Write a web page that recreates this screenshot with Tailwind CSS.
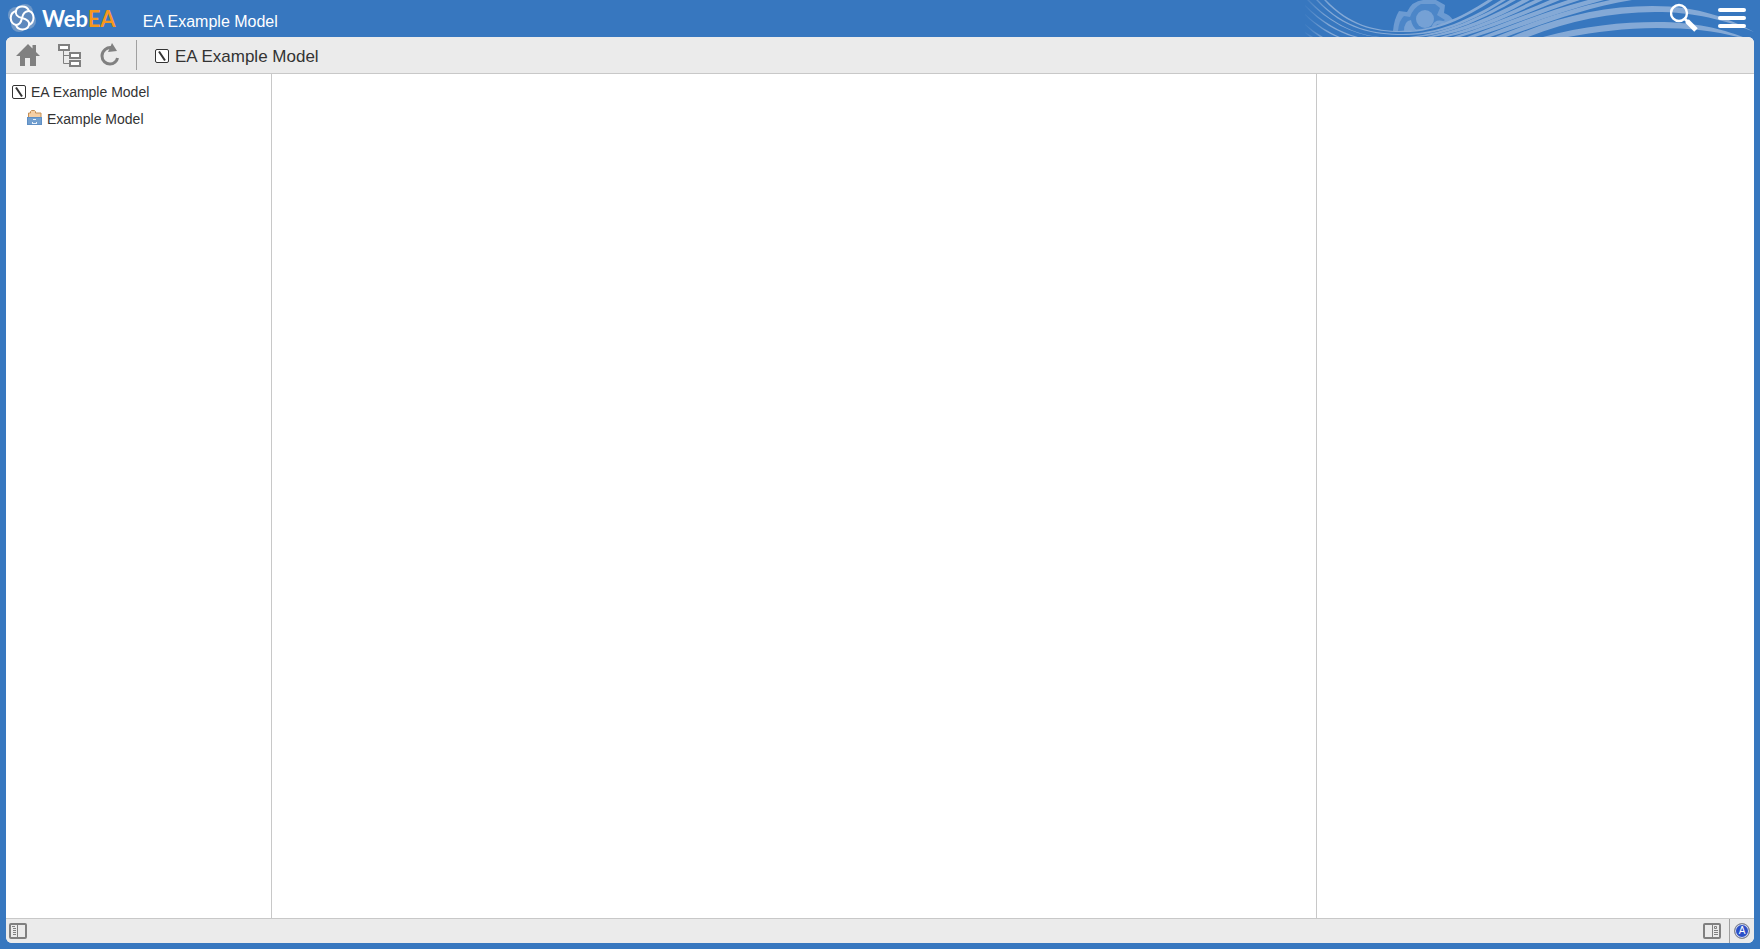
<!DOCTYPE html>
<html lang="en">
  <head>
    <meta charset="UTF-8" />
    <meta name="viewport" content="width=device-width, initial-scale=1.0" />
    <title>WebEA - EA Example Model</title>
    <script src="https://cdn.jsdelivr.net/npm/@tailwindcss/browser@4"></script>
  </head>
  <body class="flex h-screen flex-col bg-[#3777bf] font-['Liberation_Sans',Arial,sans-serif] text-[#333333]">
    <!-- Header -->
    <header class="relative flex h-[37px] shrink-0 items-center justify-between overflow-hidden pl-2 pr-[14px] text-white">
      <svg class="absolute right-0 top-0" width="460" height="37" viewBox="1300 0 460 37" fill="none" aria-hidden="true">
        <defs>
          <linearGradient id="fade" gradientUnits="userSpaceOnUse" x1="1302" y1="0" x2="1330" y2="0">
            <stop offset="0" stop-color="#84a9d6" stop-opacity="0" />
            <stop offset="1" stop-color="#84a9d6" />
          </linearGradient>
        </defs>
        <!-- Cog flower -->
        <path d="M1393 31Q1394 19 1399 11L1407 12Q1412 1 1423 0H1436L1445 5L1444 13Q1450 15 1453 20L1440 27L1415 31Z" fill="#6c9bd2" />
        <path d="M1398 31Q1399 20 1404 16L1410 17Q1413 8 1421 4H1435L1440 8L1437 15L1445 20L1433 28Z" fill="#4c86c8" />
        <circle cx="1425" cy="19" r="9" fill="#75a1d5" />
        <path d="M1404 31Q1404 21 1411 20Q1412 27 1418 31Z" fill="#75a1d5" />
        <path d="M1433 27Q1436 20 1444 23" stroke="#75a1d5" stroke-width="3" />
        <!-- Waves -->
        <path d="M1390 38V32Q1440 34 1490 0H1560L1470 37Z" fill="#3777bf" />
        <g fill="url(#fade)">
          <path d="M1326 0C1350 25 1375 31 1401 31C1432 31 1460 18 1488 0H1493C1464 19 1435 33 1401 32C1374 32 1348 26 1324 0Z" />
          <path d="M1318 0C1345 29 1375 34 1403 34C1438 34 1470 19 1501 0H1506C1475 20 1441 36 1403 35C1374 35 1344 30 1316 0Z" />
          <path d="M1309 0C1330 22 1355 35 1380 37H1376C1352 34 1328 22 1307 0Z" />
          <path d="M1305 5C1322 22 1340 32 1358 37H1354C1337 32 1320 22 1305 6Z" />
          <path d="M1305 14C1317 25 1330 33 1340 37H1337C1327 33 1315 25 1305 15Z" />
          <path d="M1305 24Q1314 32 1323 37H1320Q1312 32 1305 25Z" />
          <path d="M1305 32L1313 37H1310L1305 33Z" />
          <path d="M1409 37C1447 33 1480 17 1510 0H1516C1485 18 1452 34 1418 37Z" />
          <path d="M1426 37C1460 30 1492 16 1522 0H1530C1498 18 1465 32 1433 37Z" />
          <path d="M1440 37C1475 28 1505 14 1535 0H1543C1512 15 1480 30 1446 37Z" />
          <path d="M1453 37C1487 26 1519 13 1550 0H1560C1526 14 1494 28 1460 37Z" />
          <path d="M1467 37C1500 25 1534 11 1568 0H1580C1543 12 1508 27 1475 37Z" />
          <path d="M1481 37C1517 23 1553 9 1588 0H1604C1565 10 1527 25 1490 37Z" />
          <path d="M1495 37C1532 22 1571 8 1610 0H1632C1588 7 1545 23 1506 37Z" />
          <path d="M1511 37C1560 16 1605 6 1652 6C1700 6 1730 19 1754 32C1725 20 1695 12 1655 12C1610 12 1570 21 1528 37Z" />
          <path d="M1543 37C1583 26 1622 22 1657 22C1695 22 1722 29 1743 37H1738C1715 31 1690 28 1657 28C1625 28 1595 32 1568 37Z" />
        </g>
      </svg>
      <div class="relative flex items-center">
        <a href="#" class="flex items-center" aria-label="WebEA home">
          <svg width="28" height="28" viewBox="0 0 28 28" fill="none" class="-mt-px" aria-hidden="true">
            <g fill="#7199c8">
              <circle cx="14" cy="14" r="12" />
              <circle cx="17" cy="8" r="8" />
              <circle cx="20" cy="17" r="8" />
              <circle cx="11" cy="20" r="8" />
              <circle cx="8" cy="11" r="8" />
            </g>
            <path d="M8 7C9 1 19 1 21 7C27 9 27 18 21 21C19 27 10 27 8 21C1 19 1 9 8 7Z" fill="#5e89bd" stroke="#fff" stroke-width="2" />
            <g stroke="#fff" stroke-width="2" stroke-linecap="round">
              <path d="M14 14C9 13 7 10 8 7" />
              <path d="M14 14C15 9 18 7 21 7" />
              <path d="M14 14C19 15 22 18 21 21" />
              <path d="M14 14C13 19 11 21 8 21" />
            </g>
          </svg>
          <span class="ml-[6px] font-[Lato,sans-serif] text-[22px] leading-[37px] font-bold">Web<span class="text-[#f7981d]">EA</span></span>
        </a>
        <span class="ml-[27px] mt-[6px] text-base">EA Example Model</span>
      </div>
      <div class="relative flex items-center gap-5">
        <button type="button" aria-label="Search">
          <svg width="28" height="32" viewBox="0 0 28 32" fill="none" stroke="#fff" aria-hidden="true">
            <circle cx="9" cy="10" r="8" stroke-width="2.400" />
            <path d="M15 16L18 19" stroke-width="3" />
            <path d="M17 18L26 27" stroke-width="5" />
          </svg>
        </button>
        <button type="button" aria-label="Menu" class="mb-px flex flex-col gap-1">
          <span class="h-1 w-7 rounded-xs bg-white"></span>
          <span class="h-1 w-7 rounded-xs bg-white"></span>
          <span class="h-1 w-7 rounded-xs bg-white"></span>
        </button>
      </div>
    </header>

    <div class="mx-[6px] mb-[6px] flex min-h-0 flex-1 flex-col overflow-hidden rounded-md bg-white">
      <!-- Toolbar -->
      <nav class="flex h-[37px] shrink-0 items-center border-b border-[#c8c8c8] bg-[#ebebeb] pl-[10px]">
        <button type="button" aria-label="Home">
          <svg width="24" height="24" viewBox="0 0 24 24" fill="#808080" aria-hidden="true">
            <path d="M12 1L16.500 5.500V2H20V9L24 13H20V23H14V15H9V23H4V13H0Z" />
          </svg>
        </button>
        <button type="button" aria-label="Model tree" class="ml-[18px]">
          <svg width="24" height="24" viewBox="0 0 24 24" fill="#fff" stroke="#808080" stroke-width="2" aria-hidden="true">
            <path d="M5.500 7V20.500H12M6 12.500H12" fill="none" stroke-width="1" />
            <rect x="1" y="2" width="10" height="5" />
            <rect x="12" y="10" width="10" height="5" />
            <rect x="12" y="18" width="10" height="5" />
          </svg>
        </button>
        <button type="button" aria-label="Refresh" class="ml-[18px]">
          <svg width="20" height="24" viewBox="0 0 20 24" fill="none" aria-hidden="true">
            <path d="M13 5C7 3 2 8 2 13C2 18 6 21 10 21C14 21 17 18 17.500 15" stroke="#808080" stroke-width="3" />
            <path d="M12 0L17 8L8 9Z" fill="#808080" />
          </svg>
        </button>
        <span class="ml-4 h-[30px] w-px bg-[#a0a0a0]"></span>
        <a href="#" class="ml-[18px] mt-[3px] flex items-center gap-[6px]">
          <svg width="14" height="14" viewBox="0 0 14 14" fill="#fff" stroke="#333" class="-mt-px" aria-hidden="true">
            <rect x="0.500" y="0.500" width="13" height="13" rx="1.500" />
            <path d="M4 2.500L10 11.500" stroke-width="2" />
          </svg>
          <span class="text-[17px] leading-6">EA Example Model</span>
        </a>
      </nav>

      <main class="flex min-h-0 flex-1">
        <!-- Model browser -->
        <aside class="w-[266px] shrink-0 border-r border-[#c8c8c8] pl-[6px] pt-1 text-sm">
          <ul>
            <li>
              <a href="#" class="flex h-[27px] items-center gap-[5px]">
                <svg width="14" height="14" viewBox="0 0 14 14" fill="#fff" stroke="#333" aria-hidden="true">
                  <rect x="0.500" y="0.500" width="13" height="13" rx="1.500" />
                  <path d="M4 2.500L10 11.500" stroke-width="2" />
                </svg>
                <span>EA Example Model</span>
              </a>
            </li>
            <li>
              <a href="#" class="ml-[15px] flex h-[27px] items-center gap-[5px]">
                <svg width="15" height="15" viewBox="0 0 15 15" class="-mt-[2px]" aria-hidden="true">
                  <path d="M3.500 3V1.500L4.500 0.500H7.500L8.500 1.500V3H14V8H1.500V3Z" fill="#f6cfa4" stroke="#c58f55" />
                  <rect x="0.500" y="7.500" width="14" height="7" fill="#729fcf" stroke="#5f8fc4" />
                  <path d="M6 9H9V10H6ZM5 12H6V13H9V12H10V14H5Z" fill="#e8f0fa" />
                </svg>
                <span>Example Model</span>
              </a>
            </li>
          </ul>
        </aside>
        <section class="min-w-0 flex-1"></section>
        <aside class="w-[438px] shrink-0 border-l border-[#c8c8c8]"></aside>
      </main>

      <!-- Status bar -->
      <footer class="flex h-[25px] shrink-0 items-center justify-between border-t border-[#c8c8c8] bg-[#ebebeb] pl-[3px]">
        <button type="button" aria-label="Toggle browser">
          <svg width="18" height="16" viewBox="0 0 18 16" fill="none" stroke="#808080" aria-hidden="true">
            <rect x="1" y="1" width="16" height="14" rx="1" stroke-width="2" />
            <path d="M8.500 2V14M3 3.500H6M4 5.500H7M4 7.500H7M4 9.500H7M4 11.500H7" />
          </svg>
        </button>
        <div class="flex h-full items-center">
          <button type="button" aria-label="Toggle properties">
            <svg width="18" height="16" viewBox="0 0 18 16" fill="none" stroke="#808080" aria-hidden="true">
              <rect x="1" y="1" width="16" height="14" rx="1" stroke-width="2" />
              <path d="M9.500 2V14M11.500 3.500H13.500V5.500H11.500ZM11 7.500H15M11 9.500H15M11 11.500H15" />
            </svg>
          </button>
          <span class="ml-2 h-full w-px bg-[#a0a0a0]"></span>
          <button type="button" aria-label="Account" class="mx-1 mb-px flex size-4 items-center justify-center rounded-full border border-[#8a8a8a] bg-[#2b50c8] text-[10px] leading-none text-white ring-1 ring-inset ring-[#d8dcea]">A</button>
        </div>
      </footer>
    </div>
  </body>
</html>
